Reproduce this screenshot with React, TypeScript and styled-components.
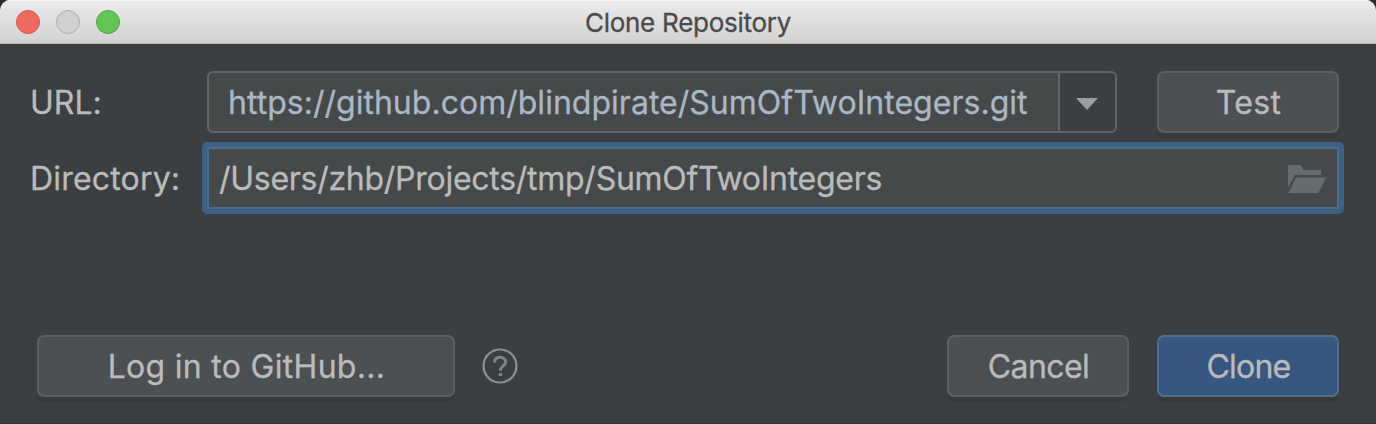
import React from 'react';
import styled, { createGlobalStyle } from 'styled-components';

const GlobalStyle = createGlobalStyle`
  * { box-sizing: border-box; }
  body { margin: 0; background: #29292b; }
`;

const Dialog = styled.div`
  display: flex;
  flex-direction: column;
  width: 1376px;
  height: 424px;
  overflow: hidden;
  border-radius: 10px 10px 0 0;
  background: #3c3f41;
  border-bottom: 1px solid #313335;
  font-family: Inter, 'Liberation Sans', sans-serif;
  font-size: 32px;
  font-feature-settings: 'calt' 0;
  -webkit-text-stroke: 0.3px currentColor;
  color: #bbbbbb;
  white-space: nowrap;
`;

const TitleBar = styled.header`
  display: grid;
  grid-template-columns: 1fr auto 1fr;
  align-items: center;
  height: 44px;
  padding: 0 16px;
  background: linear-gradient(#ebebeb, #d2d2d2);
  border-bottom: 1px solid #b2b2b2;
  box-shadow: inset 0 1px 0 #f7f7f7;
`;

const Lights = styled.div`
  display: flex;
  gap: 16px;
`;

const Light = styled.span<{ $fill: string; $edge: string }>`
  width: 24px;
  height: 24px;
  border-radius: 50%;
  background: ${(p) => p.$fill};
  border: 1px solid ${(p) => p.$edge};
`;

const Title = styled.h1`
  margin: 0;
  padding-top: 2px;
  font-size: 26px;
  line-height: 42px;
  font-weight: 400;
  letter-spacing: -0.27px;
  color: #4b4b4b;
`;

const Text = styled.span<{ $track?: number }>`
  letter-spacing: ${(p) => p.$track ?? 0}px;
`;

const Form = styled.main`
  display: flex;
  flex-direction: column;
  gap: 9px;
  padding: 27px 32px 0 30px;
`;

const Row = styled.div`
  display: flex;
  align-items: center;
`;

const Label = styled.label`
  width: 172px;
  padding-top: 1px;
`;

const Combo = styled.div`
  display: flex;
  width: 910px;
  height: 62px;
  margin: 0 40px 0 5px;
  border: 2px solid #646464;
  border-radius: 6px;
  background: #45494a;
  color: #a9b7c6;
  overflow: hidden;
`;

const ComboValue = styled.div`
  flex: 1;
  padding-left: 19px;
  line-height: 60px;
`;

const ComboArrow = styled.div`
  display: flex;
  align-items: center;
  justify-content: center;
  width: 57px;
  padding: 3px 2px 0 0;
  border-left: 2px solid #646464;
  background: #3c3f41;
`;

const PathField = styled.div`
  display: flex;
  align-items: center;
  justify-content: space-between;
  width: 1142px;
  height: 72px;
  padding: 1px 13px 0 12px;
  border: 5px solid #3d6185;
  border-radius: 5px;
  background: #45494a;
  box-shadow: inset 0 0 0 2px #466d94;
`;

const Button = styled.button<{ $width: number; $primary?: boolean }>`
  width: ${(p) => p.$width}px;
  height: 62px;
  padding: 1px 0 0 1px;
  border: 2px solid ${(p) => (p.$primary ? '#4c708c' : '#5e6060')};
  border-radius: 7px;
  background: ${(p) => (p.$primary ? '#365880' : '#4c5052')};
  box-shadow: 0 5px 0 #38393a;
  color: #bbbbbb;
  font: inherit;
  font-feature-settings: inherit;
`;

const Footer = styled.footer`
  display: flex;
  align-items: center;
  margin-top: auto;
  padding: 0 37px 26px;
`;

const HelpIcon = styled.svg`
  margin: 0 auto 0 27px;
`;

const Actions = styled.div`
  display: flex;
  gap: 28px;
`;

export default function App() {
  return (
    <>
      <GlobalStyle />
      <Dialog>
        <TitleBar>
          <Lights>
            <Light $fill="#ee6a5f" $edge="#d5544a" />
            <Light $fill="#d0d0d0" $edge="#adadad" />
            <Light $fill="#62c655" $edge="#4fa73f" />
          </Lights>
          <Title>Clone Repository</Title>
        </TitleBar>
        <Form>
          <Row>
            <Label><Text>URL:</Text></Label>
            <Combo>
              <ComboValue><Text $track={0.02}>https://github.com/blindpirate/SumOfTwoIntegers.git</Text></ComboValue>
              <ComboArrow>
                <svg width="22" height="12" viewBox="0 0 22 12">
                  <path d="M0 0H22L11 12Z" fill="#9c9ea0" />
                </svg>
              </ComboArrow>
            </Combo>
            <Button $width={182}><Text $track={0.3}>Test</Text></Button>
          </Row>
          <Row>
            <Label><Text $track={0.18}>Directory:</Text></Label>
            <PathField>
              <Text $track={-0.27}>/Users/zhb/Projects/tmp/SumOfTwoIntegers</Text>
              <svg width="38" height="28" viewBox="0 0 38 28">
                <path d="M0 0H13L15.5 5H33V10H7L0 22.5Z" fill="#646c70" />
                <path d="M8 12.5H38L30.5 28H0.5Z" fill="#646c70" />
              </svg>
            </PathField>
          </Row>
        </Form>
        <Footer>
          <Button $width={418}><Text $track={0.3}>Log in to GitHub...</Text></Button>
          <HelpIcon width="36" height="36" viewBox="0 0 36 36" fill="none">
            <circle cx="18" cy="18" r="16.5" stroke="#87939a" strokeWidth="2.2" />
            <path d="M12.6 14.4C12.6 10.9 15 9.2 18 9.2C21.3 9.2 23.6 11.2 23.6 14.1C23.6 18 18.3 18 18.3 22.8" stroke="#7b868c" strokeWidth="3" />
            <path d="M16.7 25H20V28H16.7Z" fill="#7b868c" />
          </HelpIcon>
          <Actions>
            <Button $width={182}><Text $track={-0.6}>Cancel</Text></Button>
            <Button $width={182} $primary><Text $track={-0.8}>Clone</Text></Button>
          </Actions>
        </Footer>
      </Dialog>
    </>
  );
}
